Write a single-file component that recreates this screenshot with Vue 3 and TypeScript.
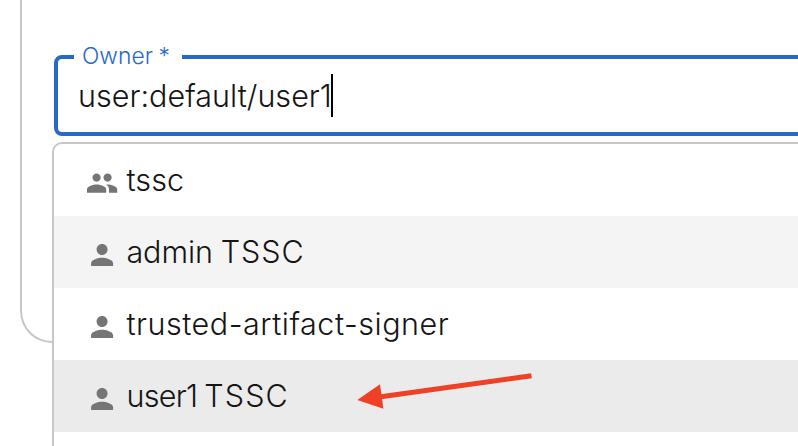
<script setup lang="ts">
interface Word {
  text: string
  tracking: number
}

interface Option {
  words: Word[]
  kind: 'group' | 'user'
  state?: 'hover' | 'selected'
}

const value = 'user:default/user1'

const options: Option[] = [
  { words: [{ text: 'tssc', tracking: 0.1 }], kind: 'group' },
  { words: [{ text: 'admin ', tracking: -0.05 }, { text: 'TSSC', tracking: 0.95 }], kind: 'user', state: 'hover' },
  { words: [{ text: 'trusted-artifact-signer', tracking: 0.52 }], kind: 'user' },
  { words: [{ text: 'user1 ', tracking: -0.7 }, { text: 'TSSC', tracking: 1.1 }], kind: 'user', state: 'selected' },
]

const icons: Record<Option['kind'], string> = {
  user: 'M12 12c2.21 0 4-1.79 4-4s-1.79-4-4-4-4 1.79-4 4 1.79 4 4 4zm0 2c-2.67 0-8 1.34-8 4v2h16v-2c0-2.66-5.33-4-8-4z',
  group:
    'M16 11c1.66 0 2.99-1.34 2.99-3S17.66 5 16 5c-1.66 0-3 1.34-3 3s1.34 3 3 3zm-8 0c1.66 0 2.99-1.34 2.99-3S9.66 5 8 5C6.34 5 5 6.34 5 8s1.34 3 3 3zm0 2c-2.33 0-7 1.17-7 3.5V19h14v-2.5c0-2.33-4.67-3.5-7-3.5zm8 0c-.29 0-.62.02-.97.05 1.16.84 1.97 1.97 1.97 3.45V19h6v-2.5c0-2.33-4.67-3.5-7-3.5z',
}
</script>

<template>
  <main class="page">
    <section class="card">
      <div class="field">
        <label class="label">Owner *</label>
        <div class="control">
          <span class="value">{{ value }}</span><span class="caret"></span>
        </div>
      </div>
    </section>

    <ul class="listbox" role="listbox">
      <li v-for="(option, i) in options" :key="i" class="option" :class="option.state" role="option">
        <svg class="icon" viewBox="0.3 0.3 24 24" aria-hidden="true"><path :d="icons[option.kind]" /></svg>
        <span class="name"><span v-for="word in option.words" :key="word.text" :style="{ letterSpacing: word.tracking + 'px' }">{{ word.text }}</span></span>
      </li>
    </ul>

    <svg class="arrow" viewBox="0 0 180 40" aria-hidden="true">
      <path d="M174.5 5.7 24 26.7" />
      <polygon points="0.3,29.9 23,14.2 26.4,38.8" />
    </svg>
  </main>
</template>

<style>
body {
  background: #fff;
  overflow: hidden;
}
</style>

<style scoped>
.page {
  position: relative;
  box-sizing: border-box;
  width: 100vw;
  height: 446px;
  overflow: hidden;
  padding-left: 20px;
  background: #fff;
  color: #151515;
  font-family: Inter, "Liberation Sans", sans-serif;
  font-size: 30.5px;
  font-weight: 300;
}

.card {
  box-sizing: border-box;
  width: 860px;
  height: 343px;
  padding: 55px 0 0 32px;
  border: 2px solid #c7c7c7;
  border-top: 0;
  border-radius: 0 0 32px 32px;
}

.field {
  position: relative;
  box-sizing: border-box;
  height: 81px;
  padding: 15px 20px;
  border: 4px solid #2769c5;
  border-radius: 8px;
}

.label {
  position: absolute;
  top: -17px;
  left: 16px;
  box-sizing: border-box;
  width: 108px;
  height: 28px;
  padding-left: 8px;
  background: #fff;
  color: #2769c5;
  font-size: 22.8px;
  line-height: 28px;
  letter-spacing: 0.05px;
  word-spacing: -0.8px;
  white-space: nowrap;
}

.control {
  display: flex;
  height: 43px;
}

.value {
  line-height: 44px;
  letter-spacing: 0.02px;
}

.caret {
  width: 2px;
  height: 43px;
  margin-left: -0.6px;
  background: #000;
}

.listbox {
  position: absolute;
  top: 142px;
  left: 52px;
  box-sizing: border-box;
  width: 820px;
  height: 380px;
  margin: 0;
  padding: 0;
  overflow: hidden;
  border: 2px solid #c7c7c7;
  border-radius: 10px;
  background: #fff;
  list-style: none;
}

.option {
  display: flex;
  align-items: flex-start;
  gap: 7.4px;
  height: 72px;
  padding-left: 32px;
  line-height: 72px;
  white-space: nowrap;
}

.name {
  white-space: pre;
  word-spacing: -0.8px;
}

.hover {
  background: #f4f4f4;
}

.selected {
  background: #ebebeb;
}

.icon {
  flex: none;
  width: 33px;
  height: 33px;
  margin-top: 23px;
  fill: #757575;
}

.arrow {
  position: absolute;
  top: 370px;
  left: 357px;
  width: 180px;
  height: 40px;
  fill: #ee4126;
}

.arrow path {
  fill: none;
  stroke: #ee4126;
  stroke-width: 5;
}
</style>
